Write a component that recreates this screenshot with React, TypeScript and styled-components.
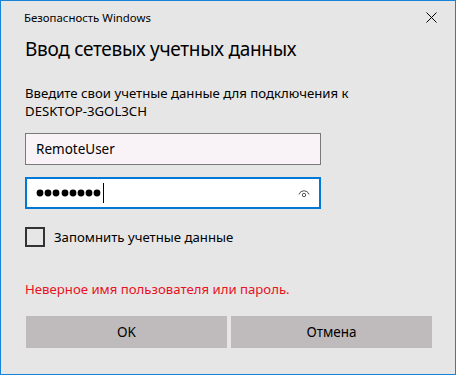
import React from 'react';
import styled, { createGlobalStyle } from 'styled-components';

const Global = createGlobalStyle`
  html, body {
    margin: 0;
    padding: 0;
    background: #e6e6e6;
  }
  * { box-sizing: border-box; }
`;

const Window = styled.div`
  width: 456px;
  height: 375px;
  background: #e6e6e6;
  border: 1px solid #1883d7;
  font-family: "Noto Sans", "Open Sans", sans-serif;
  color: #000;
  display: flex;
  flex-direction: column;
`;

const TitleBar = styled.div`
  height: 32px;
  display: flex;
  align-items: center;
  justify-content: space-between;
  padding: 0 12px 0 23px;
  font-size: 11.4px;
`;

const CloseButton = styled.div`
  width: 24px;
  height: 24px;
  display: flex;
  align-items: center;
  justify-content: center;
`;

const Content = styled.div`
  padding: 0 24px 0 24px;
  display: flex;
  flex-direction: column;
  align-items: flex-start;
  flex: 1;
`;

const Heading = styled.h1`
  margin: 2px 0 0 0;
  font-weight: 400;
  font-size: 19px;
  line-height: 28px;
  letter-spacing: -0.3px;
`;

const Description = styled.p`
  margin: 21px 0 0 0;
  font-size: 13.2px;
  line-height: 18px;
`;

const Field = styled.div<{ $focused?: boolean }>`
  width: 296px;
  flex: none;
  height: 32px;
  margin-top: ${p => (p.$focused ? '12px' : '13px')};
  background: ${p => (p.$focused ? '#fff' : '#f9f3f7')};
  border: ${p => (p.$focused ? '2px solid #0078d7' : '1px solid #7a7a7a')};
  display: flex;
  align-items: center;
  padding: 0 ${p => (p.$focused ? '9px' : '10px')};
  font-size: 13.5px;
`;

const Dots = styled.span`
  display: flex;
  align-items: center;
`;

const Caret = styled.span`
  width: 1px;
  height: 20px;
  background: #000;
  margin-left: 1px;
`;

const Eye = styled.div`
  margin-left: auto;
  display: flex;
  align-items: center;
`;

const CheckRow = styled.label`
  margin-top: 18px;
  display: flex;
  align-items: center;
  gap: 9px;
  font-size: 13.2px;
`;

const Box = styled.span`
  width: 20px;
  height: 20px;
  border: 2px solid #333;
  display: inline-block;
`;

const ErrorText = styled.div`
  margin-top: 33px;
  color: #e81123;
  font-size: 13.2px;
  line-height: 18px;
`;

const Buttons = styled.div`
  margin-top: 18px;
  margin-left: 1px;
  display: grid;
  grid-template-columns: 201px 201px;
  gap: 4px;
`;

const Button = styled.button`
  height: 32px;
  border: none;
  background: #bfbbbd;
  font-family: inherit;
  font-size: 13.5px;
  color: #000;
`;

const Bullet = () => (
  <svg width="8.2" height="8" viewBox="0 0 8.2 8">
    <circle cx="4" cy="4" r="3.4" fill="#000" />
  </svg>
);

export default function App() {
  return (
    <>
      <Global />
      <Window>
        <TitleBar>
          <span>Безопасность Windows</span>
          <CloseButton>
            <svg width="11" height="11" viewBox="0 0 11 11">
              <path d="M0.5 0.5 L10.5 10.5 M10.5 0.5 L0.5 10.5" stroke="#000" strokeWidth="1" />
            </svg>
          </CloseButton>
        </TitleBar>
        <Content>
          <Heading>Ввод сетевых учетных данных</Heading>
          <Description>
            Введите свои учетные данные для подключения к
            <br />
            DESKTOP-3GOL3CH
          </Description>
          <Field>RemoteUser</Field>
          <Field $focused>
            <Dots>
              {Array.from({ length: 8 }).map((_, i) => (
                <Bullet key={i} />
              ))}
            </Dots>
            <Caret />
            <Eye>
              <svg width="12" height="9" viewBox="0 0 12 9">
                <path d="M1 5.5 A5.2 5.2 0 0 1 11 5.5" fill="none" stroke="#555" strokeWidth="1" />
                <circle cx="6" cy="6" r="1.7" fill="none" stroke="#555" strokeWidth="1" />
              </svg>
            </Eye>
          </Field>
          <CheckRow>
            <Box />
            Запомнить учетные данные
          </CheckRow>
          <ErrorText>Неверное имя пользователя или пароль.</ErrorText>
          <Buttons>
            <Button>OK</Button>
            <Button>Отмена</Button>
          </Buttons>
        </Content>
      </Window>
    </>
  );
}
